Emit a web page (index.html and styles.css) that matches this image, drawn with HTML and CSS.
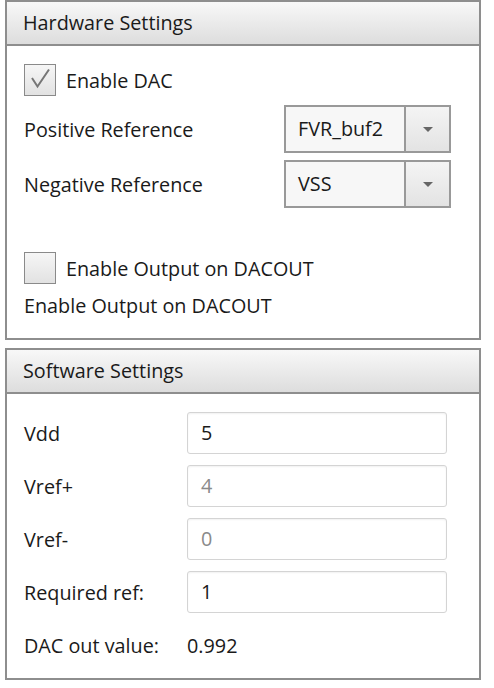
FILE: index.html
```html
<!DOCTYPE html>
<html lang="en">
<head>
    <meta charset="UTF-8">
    <title>DAC Settings</title>
    <link rel="stylesheet" href="styles.css">
</head>
<body>

    <div class="panel hardware">
        <div class="panel-header">Hardware Settings</div>
        <div class="panel-body">
            <label class="check-row first">
                <span class="checkbox checked">
                    <svg width="32" height="32" viewBox="0 0 32 32"><path d="M8 14 L13.5 22.5 L25 5.5" fill="none" stroke="#767676" stroke-width="2"/></svg>
                </span>
                <span>Enable DAC</span>
            </label>

            <div class="combo-row ref-pos">
                <span class="label">Positive Reference</span>
                <div class="combo">
                    <span class="combo-text">FVR_buf2</span>
                    <span class="combo-btn"><span class="arrow"></span></span>
                </div>
            </div>

            <div class="combo-row ref-neg">
                <span class="label">Negative Reference</span>
                <div class="combo">
                    <span class="combo-text">VSS</span>
                    <span class="combo-btn"><span class="arrow"></span></span>
                </div>
            </div>

            <label class="check-row output">
                <span class="checkbox"></span>
                <span>Enable Output on DACOUT</span>
            </label>

            <div class="text-row">Enable Output on DACOUT</div>
        </div>
    </div>

    <div class="panel software">
        <div class="panel-header">Software Settings</div>
        <div class="panel-body">
            <div class="field-row">
                <span class="label">Vdd</span>
                <div class="textbox">5</div>
            </div>
            <div class="field-row">
                <span class="label">Vref+</span>
                <div class="textbox disabled">4</div>
            </div>
            <div class="field-row">
                <span class="label">Vref-</span>
                <div class="textbox disabled">0</div>
            </div>
            <div class="field-row">
                <span class="label">Required ref:</span>
                <div class="textbox">1</div>
            </div>
            <div class="result-row">
                <span class="label">DAC out value:</span>
                <span class="value">0.992</span>
            </div>
        </div>
    </div>

</body>
</html>
```

FILE: styles.css
```css
body {
    margin: 0;
    padding: 0;
    background: #fff;
    font-family: "Open Sans", "Noto Sans", sans-serif;
    font-size: 19.8px;
    color: #1a1a1a;
}

.panel {
    width: 472px;
    margin-left: 5px;
    border: 2px solid #8e8e8e;
    box-sizing: content-box;
}

.hardware {
    margin-top: 0;
}

.software {
    margin-top: 8px;
}

.panel-header {
    height: 42px;
    line-height: 42px;
    padding-left: 16px;
    background: linear-gradient(to bottom, #f8f8f8, #dddddd);
    border-bottom: 2px solid #8e8e8e;
}

.panel-body {
    padding-left: 17px;
    display: flex;
    flex-direction: column;
}

.hardware .panel-body {
    padding-bottom: 18px;
}

.software .panel-body {
    padding-top: 18px;
    padding-bottom: 16px;
}

/* checkboxes */
.check-row {
    display: flex;
    align-items: center;
    height: 40px;
}

.check-row.first {
    margin-top: 14px;
}

.check-row.output {
    margin-top: 40px;
}

.checkbox {
    width: 30px;
    height: 30px;
    margin-right: 10px;
    border: 1px solid #8a8a8a;
    background: linear-gradient(to bottom, #f6f6f6, #e2e2e2);
    position: relative;
}

.checkbox svg {
    position: absolute;
    left: -1px;
    top: -1px;
}

.text-row {
    height: 28px;
    line-height: 28px;
    margin-top: 4px;
}

/* combo boxes */
.combo-row {
    display: flex;
    align-items: center;
    height: 48px;
}

.ref-pos {
    margin-top: 5px;
}

.ref-neg {
    margin-top: 7px;
}

.combo-row .label {
    width: 260px;
}

.combo {
    display: flex;
    width: 163px;
    height: 44px;
    border: 2px solid #999;
}

.combo-text {
    width: 106px;
    padding-left: 12px;
    line-height: 44px;
    background: #f7f7f7;
    border-right: 2px solid #999;
}

.combo-btn {
    flex: 1;
    display: flex;
    align-items: center;
    justify-content: center;
    background: linear-gradient(to bottom, #f4f4f4, #e3e3e3);
}

.arrow {
    width: 0;
    height: 0;
    border-left: 5px solid transparent;
    border-right: 5px solid transparent;
    border-top: 5px solid #666;
}

/* text fields */
.field-row {
    display: flex;
    align-items: center;
    height: 42px;
    margin-bottom: 11px;
}

.field-row .label,
.result-row .label {
    width: 163px;
}

.textbox {
    width: 245px;
    height: 40px;
    line-height: 40px;
    padding-left: 13px;
    border: 1px solid #d4d4d4;
    border-radius: 3px;
    box-shadow: inset 0 1px 2px rgba(0, 0, 0, 0.06);
    background: #fff;
}

.textbox.disabled {
    color: #8a8a8a;
}

.result-row {
    display: flex;
    align-items: center;
    height: 34px;
    margin-top: 4px;
}
```
